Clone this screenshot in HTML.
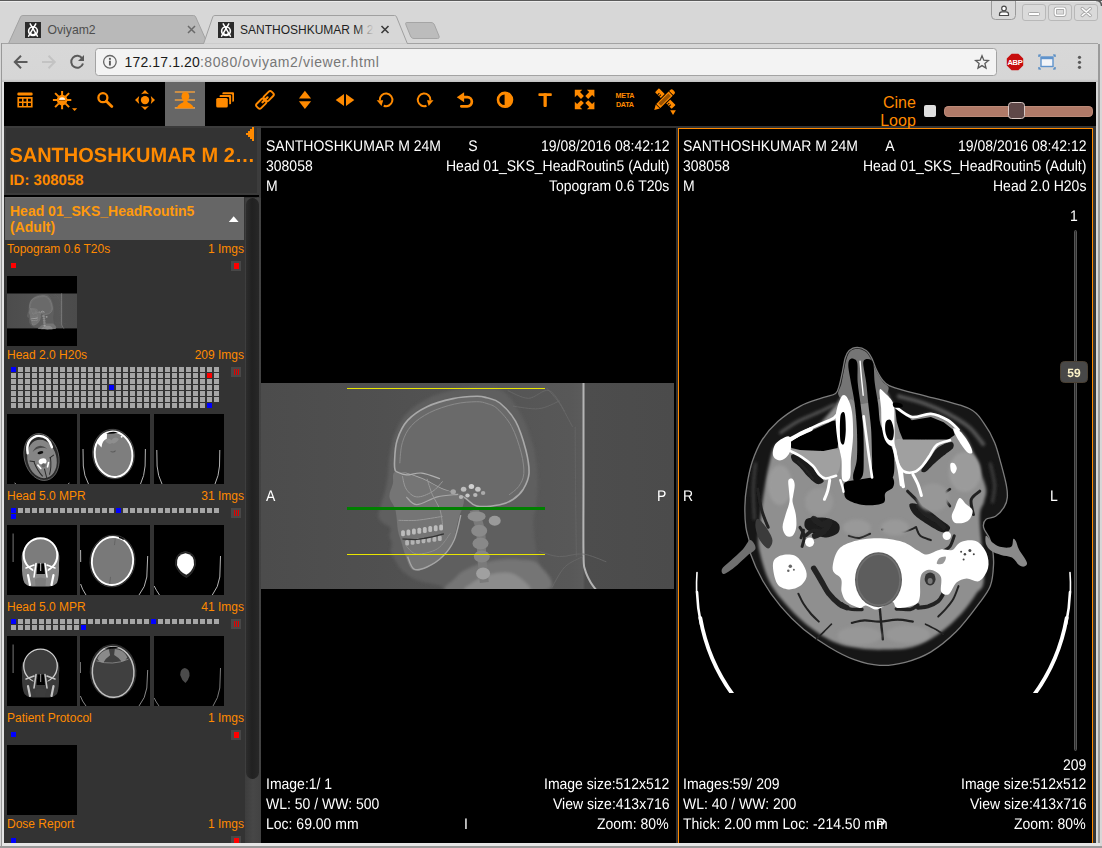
<!DOCTYPE html>
<html>
<head>
<meta charset="utf-8">
<title>SANTHOSHKUMAR M 24M</title>
<style>
*{box-sizing:border-box;margin:0;padding:0}
html,body{width:1102px;height:848px;overflow:hidden}
body{background:#d7d7d7;font-family:"Liberation Sans",sans-serif;position:relative}
.abs{position:absolute}
#frame-l1{left:2px;top:44px;width:2px;height:800px;background:#e4e4e4}
#frame-l2{left:1px;top:43px;width:1px;height:804px;background:#999}
#frame-top{left:0;top:0;width:1102px;height:1px;background:#5a5a5a}
#frame-r1{left:1098px;top:44px;width:2px;height:803px;background:#9a9a9a}
#frame-b1{left:2px;top:843px;width:1098px;height:3px;background:#e6e6e6}
#frame-b2{left:0;top:846px;width:1102px;height:2px;background:#9a9a9a}
/* tabs */
.tabtxt{font-size:13px;white-space:nowrap}
#nav{left:2px;top:44px;width:1096px;height:38px;background:linear-gradient(#d8d8d8,#d6d6d6 92%,#c2c2c2)}
#url{left:95px;top:48px;width:902px;height:28px;background:#f3f3f3;border:1px solid #a3a3a3;border-radius:3.5px}
#urltxt{left:124.6px;top:53px;font-size:14px;line-height:18px;color:#1a1a1a;white-space:nowrap;letter-spacing:0.12px}
#urltxt span{color:#777;letter-spacing:0.58px}
/* page */
#page{left:4px;top:82px;width:1092px;height:761px;background:#333;overflow:hidden}
#toolbar{left:0;top:0;width:1092px;height:44px;background:#000}
#toolsel{left:161px;top:0;width:40px;height:44px;background:#666}
.o{color:#ff8a00}
/* left */
#left{left:0;top:44px;width:257px;height:717px;background:#333}
#pname{left:5.4px;top:62px;width:250px;font-size:20px;font-weight:bold;line-height:24px;color:#ff8a00;white-space:nowrap;text-rendering:geometricPrecision;transform-origin:0 18.93px;transform:scaleY(1.03)}
#pid{left:5.4px;top:90px;font-size:15px;font-weight:bold;line-height:18px;color:#ff8a00;white-space:nowrap;text-rendering:geometricPrecision}
#sep{left:0;top:113px;width:255px;height:2px;background:#000}
#study{left:1px;top:115px;width:239px;height:43px;background:#666;border-top:1px solid #6f6f6f}
#studytxt{left:6px;top:121px;font-size:14px;font-weight:bold;line-height:16px;color:#ff9a0c;white-space:nowrap}
.sl{position:absolute;left:3px;font-size:12px;line-height:14px;color:#ff8a00;white-space:nowrap}
.sr{position:absolute;right:852px;font-size:12px;line-height:14px;color:#ff8a00;white-space:nowrap;text-align:right}
.th{position:absolute;width:70px;height:70px;background:#000;overflow:hidden}
.sq{position:absolute;width:5px;height:5px;background:#a6a6a6}
.ib{position:absolute;left:227px;width:10px;height:10px;background:#484848}
/* viewports */
.vp{position:absolute;background:#000;overflow:hidden}
.vt{text-rendering:geometricPrecision;will-change:transform;transform-origin:0 14.85px;transform:scaleY(1.1);position:absolute;font-size:14px;line-height:20px;color:#fff;white-space:nowrap}
</style>
</head>
<body>
<div class="abs" id="frame-top"></div>
<div class="abs" id="frame-l1"></div>
<div class="abs" id="frame-l2"></div>
<div class="abs" id="frame-r1"></div>
<div class="abs" id="frame-b1"></div>
<div class="abs" id="frame-b2"></div>

<!-- TABSTRIP -->
<svg class="abs" id="tabs" style="left:0;top:0" width="1102" height="48" viewBox="0 0 1102 48">
<defs>
<linearGradient id="fade" x1="0" x2="1" y1="0" y2="0"><stop offset="0" stop-color="#d7d7d7" stop-opacity="0"/><stop offset="1" stop-color="#d7d7d7" stop-opacity="1"/></linearGradient>
<g id="fav">
<rect x="0" y="0" width="16" height="16" fill="#2b2b2b"/>
<g fill="none" stroke="#fff" stroke-linecap="round">
<path d="M5.200 1.800 L12.400 14.200 M10.800 1.800 L3.600 14.200" stroke-width="1.500"/>
<circle cx="8" cy="9.100" r="4.400" stroke-width="1.600"/>
<path d="M5.300 11.200 Q8 14.600 10.700 11.200" stroke-width="1.700"/>
</g>
</g>
</defs>
<rect x="0" y="1" width="1102" height="1" fill="#ececec"/>
<!-- toolbar top line -->
<rect x="2" y="43" width="1096" height="1" fill="#a3a3a3"/>
<!-- inactive tab -->
<path d="M8.500 43.500 L20.600 16.800 Q21.200 15.500 22.800 15.500 L193.500 15.500 Q195 15.500 195.600 16.800 L207.500 43.500 Z" fill="#b9b9b9" stroke="#a2a2a2" stroke-width="1"/>
<!-- new tab button -->
<path d="M406.500 22.500 L431 22.500 C433 22.500 433.800 23.500 434.500 25 L439 36 C439.500 37.500 439 38.500 437.500 38.500 L414 38.500 C412 38.500 411.200 37.500 410.500 36 L406 25 C405.500 23.500 405.500 22.500 406.500 22.500 Z" fill="#bcbcbc" stroke="#a5a5a5" stroke-width="1"/>
<!-- active tab -->
<path d="M203.500 44 L212.800 16.800 Q213.300 15.500 214.900 15.500 L394.500 15.500 Q396 15.500 396.500 16.800 L407.500 44 Z" fill="#d7d7d7" stroke="#a0a0a0" stroke-width="1"/>
<rect x="204" y="43.400" width="203" height="2" fill="#d7d7d7"/>
<!-- favicons -->

<use href="#fav" x="25" y="22"/>
<use href="#fav" x="218" y="22"/>
<text x="47.500" y="34" font-family="Liberation Sans, sans-serif" font-size="12.200" fill="#4e4e4e">Oviyam2</text>
<text x="240" y="34" font-family="Liberation Sans, sans-serif" font-size="12" fill="#1f1f1f">SANTHOSHKUMAR M 24M</text>
<rect x="356" y="20" width="18" height="20" fill="url(#fade)"/>
<rect x="374" y="20" width="22" height="20" fill="#d7d7d7"/>
<!-- close x -->
<path d="M188 26 L195 33 M195 26 L188 33" stroke="#6a6a6a" stroke-width="1.500" fill="none"/>
<path d="M381.500 26 L388.500 33 M388.500 26 L381.500 33" stroke="#3c3c3c" stroke-width="1.600" fill="none"/>
<!-- window controls -->
<path d="M991.500 0 L991.500 15.500 Q991.500 19.500 995.500 19.500 L1011.500 19.500 Q1015.500 19.500 1015.500 15.500 L1015.500 0" fill="#d9d9d9" stroke="#9a9a9a" stroke-width="1"/>
<g fill="#fff" stroke="#4a4a4a" stroke-width="1.200">
<circle cx="1004" cy="8.500" r="2.300"/>
<path d="M999.500 15.500 L999.500 14 Q999.500 11.800 1002 11.800 L1006 11.800 Q1008.500 11.800 1008.500 14 L1008.500 15.500 Z"/>
</g>
<g fill="#dadada" stroke="#b8b8b8" stroke-width="1">
<rect x="1022.500" y="4.500" width="23" height="16" rx="2.500"/>
<rect x="1048.500" y="4.500" width="23" height="16" rx="2.500"/>
<rect x="1074.500" y="4.500" width="23" height="16" rx="2.500"/>
</g>
<rect x="1028.500" y="12.500" width="11" height="3" rx="1" fill="#fff" stroke="#a8a8a8" stroke-width="1"/>
<rect x="1055.300" y="8.300" width="9.600" height="7" rx="1.500" fill="none" stroke="#a8a8a8" stroke-width="3.200"/>
<rect x="1055.300" y="8.300" width="9.600" height="7" rx="1.500" fill="none" stroke="#fff" stroke-width="1.500"/>
<path d="M1082.200 8.500 L1090.200 15.500 M1090.200 8.500 L1082.200 15.500" stroke="#a8a8a8" stroke-width="3.400" fill="none" stroke-linecap="round"/>
<path d="M1082.200 8.500 L1090.200 15.500 M1090.200 8.500 L1082.200 15.500" stroke="#fff" stroke-width="1.600" fill="none" stroke-linecap="round"/>
<rect x="0" y="0" width="1102" height="1" fill="#5a5a5a"/>
<path d="M1096 0.500 Q1101.500 0.500 1101.500 6" fill="none" stroke="#555" stroke-width="1.400"/>
</svg>
<div class="abs" id="nav"></div>
<div class="abs" id="url"></div>
<div class="abs" id="urltxt">172.17.1.20<span>:8080/oviyam2/viewer.html</span></div>

<svg class="abs" id="navicons" style="left:0;top:44px" width="1102" height="38" viewBox="0 44 1102 38">
<!-- back -->
<path d="M27.500 62 L15 62 M21 55.800 L14.800 62 L21 68.200" fill="none" stroke="#5a5a5a" stroke-width="2"/>
<!-- forward -->
<path d="M42 62 L54.500 62 M48.500 55.800 L54.700 62 L48.500 68.200" fill="none" stroke="#c3c3c3" stroke-width="2"/>
<!-- reload -->
<path d="M82.300 58.500 A6 6 0 1 0 83 63.500" fill="none" stroke="#5a5a5a" stroke-width="2"/>
<path d="M84 55 L84 61 L78 61 Z" fill="#5a5a5a"/>
<!-- info -->
<circle cx="109.900" cy="61.800" r="6.300" fill="none" stroke="#666" stroke-width="1.300"/>
<rect x="108.950" y="60.700" width="1.900" height="4.800" fill="#5a5a5a"/>
<rect x="108.950" y="57.900" width="1.900" height="1.900" fill="#5a5a5a"/>
<!-- star -->
<path d="M982 55.700 L983.800 60.200 L988.400 60.500 L984.900 63.500 L986 68.100 L982 65.600 L978 68.100 L979.100 63.500 L975.600 60.500 L980.200 60.200 Z" fill="none" stroke="#5a5a5a" stroke-width="1.300" stroke-linejoin="miter"/>
<!-- abp -->
<path d="M1011.600 53.800 L1018.400 53.800 L1023.200 58.600 L1023.200 65.400 L1018.400 70.200 L1011.600 70.200 L1006.800 65.400 L1006.800 58.600 Z" fill="#c70d0d"/>
<text x="1015" y="65" text-anchor="middle" font-family="Liberation Sans, sans-serif" font-weight="bold" font-size="7.500" fill="#fff" letter-spacing="-0.2">ABP</text>
<!-- screen -->
<rect x="1041" y="57" width="12" height="9.500" fill="#f2f4f8" stroke="#5f93cc" stroke-width="1.400"/>
<rect x="1041" y="57" width="12" height="2.200" fill="#5f93cc"/>
<path d="M1039 57 L1039 55 L1041 55 M1053 55 L1055 55 L1055 57 M1039 67 L1039 69 L1041 69 M1053 69 L1055 69 L1055 67" fill="none" stroke="#3f7fc0" stroke-width="1.200"/>
<!-- menu -->
<circle cx="1079.500" cy="57.300" r="1.600" fill="#5a5a5a"/>
<circle cx="1079.500" cy="62.300" r="1.600" fill="#5a5a5a"/>
<circle cx="1079.500" cy="67.300" r="1.600" fill="#5a5a5a"/>
</svg>
<!-- THUMBDEFS -->
<svg width="0" height="0" style="position:absolute;left:0;top:0"><defs>
<filter id="hb" x="-10%" y="-10%" width="120%" height="120%"><feGaussianBlur stdDeviation="0.45"/></filter>
<filter id="hb2" x="-10%" y="-10%" width="120%" height="120%"><feGaussianBlur stdDeviation="0.9"/></filter>
<g id="t_topo"><g transform="translate(0 17.500) scale(0.16949) translate(-261 -383)"><use href="#topocontent"/></g></g>
<g id="t_h1" filter="url(#hb)"><g transform="rotate(-14 34.500 43)"><ellipse cx="34.500" cy="43" rx="17.200" ry="23.800" fill="#2a2a2a" stroke="#777" stroke-width="0.700"/><ellipse cx="34.500" cy="45" rx="14.500" ry="19.500" fill="#858585"/><path d="M22 36 Q23 22.500 34.500 21.500 Q46 22.500 47 36" fill="none" stroke="#fff" stroke-width="2.400" stroke-linecap="round"/><path d="M27 36 Q34.500 27 42 36 Q34.500 32 27 36Z" fill="#4a4a4a"/><ellipse cx="34.500" cy="38.500" rx="3" ry="1.500" fill="#111"/><ellipse cx="34.500" cy="47.500" rx="4" ry="3" fill="#fff"/><ellipse cx="34.500" cy="51.500" rx="2.200" ry="2" fill="#666"/><path d="M29 50 L31 54 M40 50 L38 54" stroke="#fff" stroke-width="1.600" stroke-linecap="round"/><path d="M34.500 55 V65 M26 46 Q27 55 31 62 M43 46 Q42 55 38 62 M22 44 L27 46 M47 44 L42 46" stroke="#2c2c2c" stroke-width="1" fill="none"/></g><path d="M7.500 69 L9 70" fill="none" stroke="#aaa" stroke-width="0.9"/><path d="M61 70 L62.500 69" fill="none" stroke="#aaa" stroke-width="0.9"/></g>
<g id="t_h2" filter="url(#hb)"><g transform="rotate(-8 33.500 40)"><ellipse cx="33.500" cy="40" rx="20.800" ry="24.800" fill="#262626" stroke="#666" stroke-width="0.600"/><ellipse cx="33.500" cy="40.300" rx="18.800" ry="22.800" fill="#7e7e7e" stroke="#fff" stroke-width="2"/><path d="M19 27 Q22 19.500 30 18.500 L29 24 Q24 25 22.500 32Z" fill="#fff"/><path d="M29 18.800 Q34.500 16.500 41 19.200 Q35 20.500 29 18.800Z" fill="#000"/><path d="M27 26 Q30 22 33.500 26 Q37 22 41 26 Q37 31 33.500 29 Q30 31 27 26Z" fill="#8e8e8e"/><path d="M31 37 Q33.500 39 36 37" stroke="#5a5a5a" stroke-width="1" fill="none"/><circle cx="44" cy="24" r="1" fill="#fff"/></g><path d="M3 35 L3.300 52 Q4 62 8.500 70" fill="none" stroke="#c8c8c8" stroke-width="0.9"/><path d="M65.400 35 L65.100 52 Q64.400 62 60.500 70" fill="none" stroke="#c8c8c8" stroke-width="0.9"/></g>
<g id="t_h3" filter="url(#hb)"><path d="M2.800 36 L3.100 52 Q3.800 62 8 70" fill="none" stroke="#c8c8c8" stroke-width="0.9"/><path d="M65.800 36 L65.500 52 Q64.800 62 61 70" fill="none" stroke="#c8c8c8" stroke-width="0.9"/></g>
<g id="t_m1" filter="url(#hb)"><path d="M6.100 8.500 V37" stroke="#aaa" stroke-width="0.700"/><path d="M15 38 Q14 30 16 26 L51 26 Q53 30 52 38 Q52.500 52 50 58 Q46 62 40 61.500 L27 61.500 Q21 62 17.500 58 Q14.500 52 15 38Z" fill="#8a8a8a"/><ellipse cx="33.500" cy="30" rx="16.800" ry="16.800" fill="#7c7c7c" stroke="#fff" stroke-width="2"/><path d="M26 41 Q33.500 37 41 41 L40 53 Q33.500 56 27 53Z" fill="#8a8a8a"/><path d="M29 38.500 L27 52 M38 38.500 L40 52 M27 40 L19 43 M40 40 L48 43" stroke="#fff" stroke-width="1.600" fill="none" stroke-linecap="round"/><path d="M30.500 38.500 H37 L38 49 H29.500Z" fill="#000"/><path d="M33.700 38 V46" stroke="#fff" stroke-width="0.800"/><path d="M21 50 L23 60 M46.500 50 L44.500 60" stroke="#fff" stroke-width="2.200" stroke-linecap="round"/><path d="M28 54 Q33.500 51 39 54 L38.500 61 H28.500Z" fill="#7c7c7c"/></g>
<g id="t_b1" filter="url(#hb)"><path d="M6.100 8.500 V37" stroke="#aaa" stroke-width="0.700"/><path d="M15 38 Q14 30 16 26 L51 26 Q53 30 52 38 Q52.500 52 50 58 Q46 62 40 61.500 L27 61.500 Q21 62 17.500 58 Q14.500 52 15 38Z" fill="#3a3a3a"/><ellipse cx="33.500" cy="30" rx="16.800" ry="16.800" fill="#3d3d3d" stroke="#cfcfcf" stroke-width="1.3"/><path d="M26 41 Q33.500 37 41 41 L40 53 Q33.500 56 27 53Z" fill="#3a3a3a"/><path d="M29 38.500 L27 52 M38 38.500 L40 52 M27 40 L19 43 M40 40 L48 43" stroke="#c4c4c4" stroke-width="1.600" fill="none" stroke-linecap="round"/><path d="M30.500 38.500 H37 L38 49 H29.500Z" fill="#000"/><path d="M33.700 38 V46" stroke="#c4c4c4" stroke-width="0.800"/><path d="M21 50 L23 60 M46.500 50 L44.500 60" stroke="#c4c4c4" stroke-width="2.200" stroke-linecap="round"/><path d="M28 54 Q33.500 51 39 54 L38.500 61 H28.500Z" fill="#3d3d3d"/></g>
<g id="t_m2" filter="url(#hb)"><g transform="rotate(7 32.500 36)"><ellipse cx="32.500" cy="36" rx="22.600" ry="26" fill="#242424" stroke="#5a5a5a" stroke-width="0.500"/><ellipse cx="32.500" cy="36" rx="20.600" ry="24" fill="#797979" stroke="#fff" stroke-width="1.900"/><path d="M32.500 14 V20 M32.500 52 V59" stroke="#606060" stroke-width="0.800"/><path d="M36 11.800 Q39 12 41 13.200" stroke="#000" stroke-width="1.200" fill="none"/></g><path d="M0.600 25 L0.700 37" fill="none" stroke="#c8c8c8" stroke-width="0.9"/><path d="M67.700 31 L66.800 52 Q65.500 62 59 70" fill="none" stroke="#c8c8c8" stroke-width="0.9"/><path d="M0.600 59 Q2 64 6 70" fill="none" stroke="#c8c8c8" stroke-width="0.9"/></g>
<g id="t_m3" filter="url(#hb)"><path d="M31.500 26.500 Q42.500 28 41.500 40 Q39 49 32.500 52.500 Q24.500 49 21.500 40 Q20.500 28 31.500 26.500Z" fill="#222" stroke="#3a3a3a" stroke-width="0.600"/><path d="M31.500 28.300 Q40.800 29.500 40 40 Q38 47 32.300 49.800 Q25.500 47 23 40 Q22 29.500 31.500 28.300Z" fill="#fff"/><path d="M0.200 61 Q2 65 5.500 70" fill="none" stroke="#c8c8c8" stroke-width="0.9"/><path d="M66.500 31 L65.800 52 Q64.500 62 58.300 70" fill="none" stroke="#c8c8c8" stroke-width="0.9"/></g>
<g id="t_b2" filter="url(#hb)"><g transform="rotate(-3 33.100 35.500)"><ellipse cx="33.100" cy="35.500" rx="23.400" ry="27.400" fill="#2e2e2e"/><ellipse cx="33.100" cy="36" rx="20.800" ry="25.300" fill="#3f3f3f" stroke="#c2c2c2" stroke-width="1.500"/><path d="M18 22 Q21 14 30 13 L31 19 Q26 22 24 26 Q20 26 18 22Z" fill="#8a8a8a"/><path d="M48 22 Q45 14 36 13 L35 19 Q40 22 42 26 Q46 26 48 22Z" fill="#858585"/><path d="M26 11.800 Q33 9.500 40 11.800 Q33 13.500 26 11.800Z" fill="#000"/><path d="M17 24 Q33 30 49 24" stroke="#999" stroke-width="0.700" fill="none"/></g><path d="M0.300 26 L0.400 37" fill="none" stroke="#aaa" stroke-width="0.8"/><path d="M67.700 34 L66.800 52 Q65.500 62 59 70" fill="none" stroke="#aaa" stroke-width="0.8"/><path d="M0.400 60 Q2 65 6 70" fill="none" stroke="#aaa" stroke-width="0.8"/></g>
<g id="t_b3" filter="url(#hb)"><path d="M30.900 32 Q36 33 35.500 40 Q34 45 31.500 47 Q27.500 44 26.200 39 Q26 33 30.900 32Z" fill="#4c4c4c"/><path d="M0.200 62 Q2 66 5 70" fill="none" stroke="#999" stroke-width="0.8"/><path d="M66.500 32 L65.800 52 Q64.500 62 59 70" fill="none" stroke="#999" stroke-width="0.8"/></g>
</defs></svg>
<!-- /THUMBDEFS -->
<div class="abs" id="page">
  <div class="abs" id="toolbar"></div>
  <div class="abs" id="toolsel"></div>
  <svg class="abs" id="toolicons" style="left:0;top:0" width="1092" height="46" viewBox="4 82 1092 46">
<g fill="#ff8a00" stroke="none">
<!-- 1 table -->
<rect x="17.400" y="92.400" width="15.200" height="3.100" rx="1.200"/>
<path fill-rule="evenodd" d="M17.400 97.100 H32.600 V107.600 H17.400 Z M19.100 98.700 V101.500 H22 V98.700 Z M23.500 98.700 V101.500 H26.400 V98.700 Z M28 98.700 V101.500 H30.900 V98.700 Z M19.100 103.100 V105.900 H22 V103.100 Z M23.500 103.100 V105.900 H26.400 V103.100 Z M28 103.100 V105.900 H30.900 V103.100 Z"/>
<!-- 2 sun -->
<circle cx="62.100" cy="100.100" r="5.300"/>
<path d="M59.100 99.900 A3 2.600 0 0 1 65.100 99.900 Z" fill="#fff3e0"/>
<rect x="59" y="99.900" width="6.200" height="0.700" fill="#7a4200"/>
<g stroke="#ff8a00" stroke-width="2" stroke-linecap="butt" fill="none">
<path d="M62.100 95.300 V90.900 M62.100 104.900 V109.300 M57.300 100.100 H52.900 M66.900 100.100 H71.300 M58.600 96.600 L55.100 93.100 M65.600 96.600 L69.100 93.100 M58.600 103.600 L55.100 107.100 M65.600 103.600 L69.100 107.100"/>
</g>
<path d="M72 108.200 H77.200 L74.600 111 Z"/>
<!-- 3 search -->
<circle cx="102.900" cy="97.700" r="4.500" fill="none" stroke="#ff8a00" stroke-width="2.300"/>
<path d="M106.400 101.200 L111.800 106.600" fill="none" stroke="#ff8a00" stroke-width="2.800" stroke-linecap="round"/>
<!-- 4 move -->
<circle cx="145" cy="100.100" r="4.200"/>
<path d="M145 90.100 L149 94.300 Q145 92.800 141 94.300 Z"/>
<path d="M145 110.100 L149 105.900 Q145 107.400 141 105.900 Z"/>
<path d="M135 100.100 L139.200 96.100 Q137.700 100.100 139.200 104.100 Z"/>
<path d="M155 100.100 L150.800 96.100 Q152.300 100.100 150.800 104.100 Z"/>
<!-- 5 person -->
<g stroke="#c9a173" stroke-width="1.700"><path d="M174.800 92 H195 M174.800 100 H195 M174.800 107.900 H195"/></g>
<g stroke="#f08a10" stroke-width="0.900"><path d="M175.300 92 H194.500 M175.300 100 H194.500 M175.300 107.900 H194.500"/></g>
<ellipse cx="185.400" cy="96.400" rx="3.900" ry="4.500"/>
<path d="M183.400 99.500 H187.400 V102 Q188 102.800 190 103.600 Q192.500 104.800 193.800 107.900 H176.600 Q178 104.800 180.800 103.600 Q182.800 102.800 183.400 102 Z"/>
<!-- 6 stack -->
<rect x="216.200" y="97.900" width="11.600" height="9.700" rx="1.500"/>
<path d="M219.600 97 V96 Q219.600 95 220.600 95 H230.100 Q231.100 95 231.100 96 V103.300 Q231.100 104.300 230.100 104.300 H229.200 V98 Q229.200 97 228.200 97 Z"/>
<path d="M222.400 94.200 V93.300 Q222.400 92.300 223.400 92.300 H233 Q234 92.300 234 93.300 V100.800 Q234 101.800 233 101.800 H232.300 V95.200 Q232.300 94.200 231.300 94.200 Z"/>
<!-- 7 link -->
<g fill="none" stroke="#ff8a00" stroke-width="1.900">
<rect x="-5.200" y="-3.100" width="10.400" height="6.200" rx="2" transform="translate(268.700 96.100) rotate(-45)"/>
<rect x="-5.200" y="-3.100" width="10.400" height="6.200" rx="2" transform="translate(261.200 103.700) rotate(-45)"/>
<path d="M262.500 102.300 L267.500 97.400" stroke-width="2.300" stroke-linecap="round"/>
</g>
<!-- 8 updown -->
<path d="M304.900 90.800 L311.100 98.500 H298.900 Z"/>
<path d="M304.900 109.100 L311.100 101.300 H298.900 Z"/>
<!-- 9 leftright -->
<path d="M335.700 100 L344 94.100 V105.900 Z"/>
<path d="M354.300 100 L346 94.100 V105.900 Z"/>
<!-- 10 rotate ccw -->
<path d="M379.800 100.200 A6.300 6.300 0 1 1 383.700 105.700" fill="none" stroke="#ff8a00" stroke-width="2"/>
<path d="M376.700 100.300 L383.200 100.300 L381.500 105.900 Z"/>
<!-- 11 rotate cw -->
<path d="M430.400 100.200 A6.300 6.300 0 1 0 426.500 105.700" fill="none" stroke="#ff8a00" stroke-width="2"/>
<path d="M433.500 100.300 L427 100.300 L428.700 105.900 Z"/>
<!-- 12 undo -->
<path d="M456.800 97.200 L464.100 92.200 V102.200 Z"/>
<path d="M463.500 97.200 H467.300 A4.550 4.550 0 0 1 467.300 106.300 H461.300" fill="none" stroke="#ff8a00" stroke-width="2.700" stroke-linecap="round"/>
<!-- 13 contrast -->
<path fill-rule="evenodd" d="M505 91.500 A8.300 8.300 0 1 1 505 108.100 A8.300 8.300 0 1 1 505 91.500 Z M504.600 94.500 A5.300 5.300 0 0 0 504.600 105.100 Z"/>
<!-- 14 T -->
<rect x="538.400" y="93.300" width="13.400" height="2.800" rx="0.800"/>
<rect x="543.500" y="93.300" width="3.300" height="13.600" rx="0.800"/>
<!-- 15 expand -->
<path d="M574.800 89.800 H582.300 L580 92.100 L583.900 96 L581 98.900 L577.100 95 L574.800 97.300 Z"/>
<path d="M594.400 89.800 V97.300 L592.100 95 L588.200 98.900 L585.300 96 L589.200 92.100 L586.900 89.800 Z"/>
<path d="M574.800 109.300 V101.800 L577.100 104.100 L581 100.200 L583.900 103.100 L580 107 L582.300 109.300 Z"/>
<path d="M594.400 109.300 H586.900 L589.200 107 L585.300 103.100 L588.200 100.200 L592.100 104.100 L594.400 101.800 Z"/>
<!-- 17 ruler pencil -->
<g transform="translate(665.300 98.600) rotate(45)">
<rect x="-11.800" y="-2.800" width="23.600" height="5.600" rx="0.800"/>
<g fill="#000"><rect x="-8.500" y="0.300" width="0.900" height="2.500"/><rect x="-6.300" y="0.300" width="0.900" height="2.500"/><rect x="5.500" y="0.300" width="0.900" height="2.500"/><rect x="7.700" y="0.300" width="0.900" height="2.500"/></g>
</g>
<g transform="translate(664.300 100) rotate(-45)">
<rect x="-13.800" y="-3.900" width="27.600" height="7.800" fill="#000"/>
<path d="M-8.500 -2.900 H9 V2.900 H-8.500 Z"/>
<rect x="-6.500" y="-1.800" width="14" height="3.600" fill="#9a5200"/>
<path d="M9.800 -2.900 H11.300 Q13.300 -2.900 13.300 -0.900 V0.900 Q13.300 2.900 11.300 2.900 H9.800 Z"/>
<path d="M-9.200 -2.900 L-14.200 0 L-9.200 2.900 Z"/>
</g>
<path d="M670.200 110.200 H675.900 L673 115 Z"/>
</g>
<g font-family="Liberation Sans, sans-serif" font-weight="bold" font-size="7.200" fill="#ff8a00" text-anchor="middle" letter-spacing="-0.300">
<text x="624.800" y="98.100">META</text>
<text x="624.800" y="107.200">DATA</text>
</g>
<!-- cine loop -->
<g font-family="Liberation Sans, sans-serif" font-size="16" fill="#ff8a00" text-anchor="end">
<text x="915.800" y="108">Cine</text>
<text x="915.800" y="126">Loop</text>
</g>
<rect x="924" y="105" width="12" height="12" rx="2" fill="#dedede"/>
<rect x="944" y="106" width="149" height="11" rx="4.500" fill="#b07a68"/>
<rect x="944.500" y="106.500" width="148" height="10" rx="4" fill="none" stroke="#c59584" stroke-width="1" opacity="0.600"/>
<rect x="1008.500" y="102.500" width="16" height="16" rx="3" fill="#5f4848" stroke="#d8c8c4" stroke-width="1"/>
</svg>
  <div class="abs" id="left"></div>
  <!-- LEFTCONTENT -->
<div class="abs" style="left:0;top:44px;width:257px;height:2px;background:#3b3b3b"></div>
<div class="abs" style="left:253px;top:44px;width:4px;height:717px;background:#3c3c3c"></div>
<svg class="abs" style="left:240px;top:44px" width="12" height="17" viewBox="244 126 12 17" shape-rendering="crispEdges"><g fill="#ff8a00"><rect x="246" y="133" width="2" height="2"/><rect x="248" y="131" width="2" height="6"/><rect x="250" y="129" width="2" height="10"/><rect x="252" y="127" width="2" height="14"/></g></svg>
<div class="abs hdrborder" style="left:0;top:44px;width:2px;height:69px;background:#3b3b3b"></div>
<div class="abs" style="left:0;top:111px;width:257px;height:2px;background:#3b3b3b"></div>
<div class="abs" id="pname">SANTHOSHKUMAR M 2…</div>
<div class="abs" id="pid">ID: 308058</div>
<div class="abs" id="sep"></div>
<div class="abs" id="study"></div>
<div class="abs" id="studytxt">Head 01_SKS_HeadRoutin5<br>(Adult)</div>
<svg class="abs" style="left:224px;top:133px" width="12" height="8" viewBox="228 215 12 8"><path d="M228.800 222 L233.700 216.300 L238.600 222 Z" fill="#fff"/></svg>
<div class="abs" style="left:241px;top:116px;width:16px;height:645px;background:linear-gradient(90deg,#3d3d3d,#474747 50%,#424242)"></div>
<div class="abs" style="left:242px;top:116px;width:13px;height:581px;border-radius:7px;background:linear-gradient(90deg,#2c2c2c,#212121 45%,#272727)"></div>
<div class="sl" style="top:160px">Topogram 0.6 T20s</div>
<div class="sr" style="top:160px">1 Imgs</div>
<div class="th" style="left:3px;top:194px"><svg width="70" height="70" viewBox="0 0 70 70"><use href="#t_topo"/></svg></div>
<div class="sl" style="top:266px">Head 2.0 H20s</div>
<div class="sr" style="top:266px">209 Imgs</div>
<div class="th" style="left:3px;top:332px"><svg width="70" height="70" viewBox="0 0 70 70"><use href="#t_h1"/></svg></div>
<div class="th" style="left:76px;top:332px"><svg width="70" height="70" viewBox="0 0 70 70"><use href="#t_h2"/></svg></div>
<div class="th" style="left:150px;top:332px"><svg width="70" height="70" viewBox="0 0 70 70"><use href="#t_h3"/></svg></div>
<div class="sl" style="top:407px">Head 5.0 MPR</div>
<div class="sr" style="top:407px">31 Imgs</div>
<div class="th" style="left:3px;top:443px"><svg width="70" height="70" viewBox="0 0 70 70"><use href="#t_m1"/></svg></div>
<div class="th" style="left:76px;top:443px"><svg width="70" height="70" viewBox="0 0 70 70"><use href="#t_m2"/></svg></div>
<div class="th" style="left:150px;top:443px"><svg width="70" height="70" viewBox="0 0 70 70"><use href="#t_m3"/></svg></div>
<div class="sl" style="top:518px">Head 5.0 MPR</div>
<div class="sr" style="top:518px">41 Imgs</div>
<div class="th" style="left:3px;top:554px"><svg width="70" height="70" viewBox="0 0 70 70"><use href="#t_b1"/></svg></div>
<div class="th" style="left:76px;top:554px"><svg width="70" height="70" viewBox="0 0 70 70"><use href="#t_b2"/></svg></div>
<div class="th" style="left:150px;top:554px"><svg width="70" height="70" viewBox="0 0 70 70"><use href="#t_b3"/></svg></div>
<div class="sl" style="top:629px">Patient Protocol</div>
<div class="sr" style="top:629px">1 Imgs</div>
<div class="th" style="left:3px;top:663px"></div>
<div class="sl" style="top:735px">Dose Report</div>
<div class="sr" style="top:735px">1 Imgs</div>
<svg class="abs" style="left:0;top:168px" width="245" height="593" viewBox="4 250 245 593" shape-rendering="crispEdges"><defs><pattern id="sq" x="11" y="1" width="7" height="6" patternUnits="userSpaceOnUse"><rect width="5" height="5" fill="#a6a6a6"/></pattern></defs><g transform="translate(0 262)"><rect x="11" y="1" width="5" height="5" fill="#f00"/></g><rect x="231" y="261" width="10" height="10" fill="#484848"/><rect x="234" y="263" width="5" height="6" fill="#f00"/><g transform="translate(0 366)"><rect x="11" y="1" width="208" height="35" fill="url(#sq)"/><rect x="11" y="37" width="201" height="5" fill="url(#sq)"/><rect x="11" y="1" width="5" height="5" fill="#00f"/><rect x="109" y="19" width="5" height="5" fill="#00f"/><rect x="207" y="37" width="5" height="5" fill="#00f"/><rect x="207" y="7" width="5" height="5" fill="#f00"/></g><rect x="231" y="367" width="10" height="10" fill="#484848"/><path d="M234.300 369 V375 M236.400 369 V375 M238.500 369 V375" stroke="#e00000" stroke-width="1.100" fill="none"/><g transform="translate(0 507)"><rect x="11" y="1" width="208" height="5" fill="url(#sq)"/><rect x="11" y="7" width="5" height="5" fill="url(#sq)"/><rect x="11" y="1" width="5" height="5" fill="#00f"/><rect x="116" y="1" width="5" height="5" fill="#00f"/><rect x="11" y="7" width="5" height="5" fill="#00f"/></g><rect x="231" y="508" width="10" height="10" fill="#484848"/><path d="M234.300 510 V516 M236.400 510 V516 M238.500 510 V516" stroke="#e00000" stroke-width="1.100" fill="none"/><g transform="translate(0 618)"><rect x="11" y="1" width="208" height="5" fill="url(#sq)"/><rect x="11" y="7" width="75" height="5" fill="url(#sq)"/><rect x="11" y="1" width="5" height="5" fill="#00f"/><rect x="151" y="1" width="5" height="5" fill="#00f"/><rect x="81" y="7" width="5" height="5" fill="#00f"/></g><rect x="231" y="619" width="10" height="10" fill="#484848"/><path d="M234.300 621 V627 M236.400 621 V627 M238.500 621 V627" stroke="#e00000" stroke-width="1.100" fill="none"/><g transform="translate(0 731)"><rect x="11" y="1" width="5" height="5" fill="#00f"/></g><rect x="231" y="730" width="10" height="10" fill="#484848"/><rect x="234" y="732" width="5" height="6" fill="#f00"/><g transform="translate(0 837)"><rect x="11" y="1" width="5" height="5" fill="#00f"/></g><rect x="231" y="836" width="10" height="10" fill="#484848"/><rect x="234" y="838" width="5" height="6" fill="#f00"/></svg>
<!-- /LEFTCONTENT -->
  <!-- VIEWPORTS -->
<div class="vp" id="vp1" style="left:257px;top:46px;width:415px;height:715px">
<!-- IMG1 -->
<svg class="abs" style="left:0;top:255px" width="413" height="206" viewBox="261 383 413 206">
<defs><linearGradient id="tbg" x1="0" x2="1" y1="0" y2="0"><stop offset="0" stop-color="#4c4c4c"/><stop offset="0.3" stop-color="#505050"/><stop offset="0.75" stop-color="#585858"/><stop offset="0.779" stop-color="#5b5b5b"/><stop offset="0.785" stop-color="#4d4d4d"/><stop offset="1" stop-color="#4b4b4b"/></linearGradient>
<filter id="tb1" x="-5%" y="-5%" width="110%" height="110%"><feGaussianBlur stdDeviation="0.6"/></filter><filter id="tb2" x="-5%" y="-5%" width="110%" height="110%"><feGaussianBlur stdDeviation="1.8"/></filter>
<clipPath id="tclip"><rect x="261" y="383" width="413" height="206"/></clipPath></defs>
<g clip-path="url(#tclip)">
<g id="topocontent">
<rect x="261" y="383" width="413" height="206" fill="url(#tbg)"/>
<g filter="url(#tb2)">
<path d="M481.0 387.5 C472.7 387.3 462.0 388.1 453.0 390.0 C444.0 391.9 434.8 394.9 427.0 398.9 C419.3 402.8 411.7 407.9 406.3 413.9 C400.9 419.9 397.4 427.3 394.6 434.7 C391.8 442.0 390.5 451.5 389.4 458.0 C388.3 464.5 388.8 468.4 388.1 473.6 C387.5 478.8 386.7 484.0 385.5 489.2 C384.3 494.3 382.1 500.2 380.9 504.7 C379.6 509.3 377.9 513.4 378.3 516.4 C378.6 519.4 380.9 520.9 382.9 522.9 C385.0 524.8 389.6 525.9 390.7 528.1 C391.8 530.2 389.2 533.3 389.4 535.9 C389.6 538.4 391.8 541.0 392.0 543.6 C392.2 546.2 390.1 548.4 390.7 551.4 C391.4 554.4 394.0 558.6 395.9 561.8 C397.9 565.0 398.9 567.8 402.4 570.9 C405.9 573.9 410.4 577.5 416.7 580.0 C422.9 582.4 434.0 583.9 440.0 585.7 C446.1 587.4 435.2 589.6 453.0 590.3 C470.8 591.1 532.3 595.1 546.6 590.3 C560.9 585.6 540.8 570.0 538.8 561.8 C536.9 553.6 535.8 548.0 534.9 541.0 C534.1 534.1 533.4 526.3 533.6 520.3 C533.9 514.2 535.6 511.6 536.2 504.7 C536.9 497.8 538.0 488.3 537.5 478.8 C537.1 469.3 536.5 458.5 533.6 447.6 C530.8 436.8 525.9 423.3 520.7 413.9 C515.5 404.5 509.1 395.5 502.5 391.1 C495.9 386.7 489.3 387.6 481.0 387.5 Z" fill="#5f5f5f"/>
<path d="M450.6 592.9 C435.5 590.8 452.4 581.7 455.8 577.4 C459.3 573.0 464.9 569.8 471.4 567.0 C477.9 564.2 486.5 561.7 494.7 560.5 C502.9 559.3 513.3 559.1 520.7 559.7 C528.0 560.4 534.5 559.3 538.8 564.4 C543.2 569.5 561.3 585.6 546.6 590.3 C531.9 595.1 465.8 595.1 450.6 592.9 Z" fill="#747474"/>
<path d="M466.2 592.9 C457.5 590.8 471.8 583.2 476.6 580.0 C481.3 576.7 488.2 574.3 494.7 573.5 C501.2 572.6 509.9 571.5 515.5 574.8 C521.1 578.0 536.7 589.9 528.5 592.9 C520.2 596.0 474.8 595.1 466.2 592.9 Z" fill="#8c8c8c"/>
</g>
<g filter="url(#tb1)">
<path d="M395.9 471.5 C394.0 469.3 394.4 465.9 394.6 460.6 C394.8 455.3 395.0 446.6 397.2 439.9 C399.4 433.2 402.6 425.9 407.6 420.4 C412.6 414.9 419.5 410.3 427.0 406.7 C434.6 403.0 444.8 400.3 453.0 398.6 C461.2 396.9 470.7 396.4 476.3 396.3 C482.0 396.1 483.0 396.7 486.9 397.8 C490.9 399.0 495.2 399.1 499.9 403.0 C504.7 406.9 511.2 413.3 515.5 421.2 C519.8 429.0 523.6 441.5 525.9 450.2 C528.1 459.0 529.4 467.1 529.0 473.6 C528.5 480.1 525.9 484.8 523.3 489.2 C520.6 493.5 516.8 496.9 512.9 499.5 C509.0 502.1 506.0 503.6 499.9 504.7 C493.9 505.8 482.7 507.3 476.6 506.0 C470.5 504.7 469.0 499.7 463.4 496.9 C457.7 494.1 449.5 492.2 442.6 489.2 C435.7 486.1 427.9 481.4 421.9 478.8 C415.8 476.2 410.6 474.8 406.3 473.6 C402.0 472.4 397.9 473.7 395.9 471.5 Z" fill="#6b6b6b" stroke="#a9a9a9" stroke-width="1.6"/>
<path d="M399.8 463.2 C400.2 459.7 400.4 448.7 402.4 442.5 C404.3 436.2 406.9 430.6 411.5 425.6 C416.0 420.6 422.5 416.2 429.6 412.6 C436.8 409.0 446.5 405.9 454.3 404.1 C462.1 402.2 470.9 401.8 476.3 401.7 C481.8 401.6 483.4 402.4 486.9 403.5 C490.4 404.7 493.2 404.9 497.3 408.7 C501.4 412.5 507.6 419.0 511.6 426.4 C515.6 433.7 519.2 445.0 521.2 452.8 C523.2 460.7 524.2 468.0 523.8 473.6 C523.4 479.2 521.1 483.0 518.6 486.6 C516.1 490.1 510.6 493.5 509.0 494.9" fill="none" stroke="#8a8a8a" stroke-width="1"/>
<path d="M395.9 471.5 C391.1 472.4 393.9 479.7 392.8 484.0 C391.7 488.2 389.0 492.6 389.4 496.9 C389.9 501.3 394.0 504.3 395.4 509.9 C396.8 515.5 397.0 525.5 398.0 530.7 C398.9 535.9 399.8 536.7 401.1 541.0 C402.4 545.4 403.8 551.8 405.8 556.6 C407.7 561.4 409.2 568.3 412.8 570.1 C416.3 571.9 422.1 569.8 427.0 567.5 C432.0 565.3 438.3 561.0 442.6 556.6 C446.9 552.2 450.4 547.1 453.0 541.0 C455.6 535.0 456.4 527.6 458.2 520.3 C459.9 512.9 466.0 502.1 463.4 496.9 C460.8 491.7 449.5 492.2 442.6 489.2 C435.7 486.1 429.6 481.7 421.9 478.8 C414.1 475.8 400.8 470.6 395.9 471.5 Z" fill="#747474"/>
<path d="M395.9 471.5 C397.6 472.1 402.0 474.6 406.3 474.9 C410.6 475.1 416.2 472.4 421.9 473.1 C427.5 473.7 437.0 477.8 440.0 478.8" fill="none" stroke="#b0b0b0" stroke-width="1.2"/>
<path d="M402.4 476.2 C403.0 478.3 403.9 485.7 406.3 489.2 C408.7 492.6 412.3 496.5 416.7 496.9 C421.0 497.4 427.9 494.3 432.2 491.7 C436.6 489.2 440.9 483.1 442.6 481.4" fill="none" stroke="#9a9a9a" stroke-width="1"/>
<path d="M406.3 496.9 C408.0 498.2 411.5 504.7 416.7 504.7 C421.9 504.7 430.5 498.7 437.4 496.9 C444.3 495.2 454.7 494.8 458.2 494.3" fill="none" stroke="#a8a8a8" stroke-width="1.2"/>
<path d="M427.0 478.8 C427.9 481.4 430.1 489.2 432.2 494.3 C434.4 499.5 438.3 504.7 440.0 509.9 C441.7 515.1 442.2 522.9 442.6 525.5" fill="none" stroke="#999" stroke-width="1"/>
<path d="M398.5 520.3 C401.5 520.3 409.3 520.9 416.7 520.3 C424.0 519.6 438.3 517.0 442.6 516.4" fill="none" stroke="#999" stroke-width="1"/>
<path d="M407.6 556.6 C408.7 558.7 410.8 567.3 414.1 569.1 C417.3 570.8 422.3 569.1 427.0 567.0 C431.8 564.9 438.1 561.1 442.6 556.6 C447.1 552.1 451.3 546.7 454.3 539.7 C457.3 532.8 459.7 519.2 460.8 515.1" fill="none" stroke="#a5a5a5" stroke-width="1.4"/>
<path d="M406.3 546.2 C408.0 547.5 411.5 553.6 416.7 554.0 C421.9 554.4 431.8 552.3 437.4 548.8 C443.0 545.4 448.2 535.9 450.4 533.3" fill="none" stroke="#8c8c8c" stroke-width="1"/>
<rect x="401.1" y="530.3" width="3.800" height="6" rx="1.500" fill="#bcbcbc"/>
<rect x="406.5" y="529.4" width="3.800" height="6" rx="1.500" fill="#bcbcbc"/>
<rect x="412.0" y="528.6" width="3.800" height="6" rx="1.500" fill="#bcbcbc"/>
<rect x="417.4" y="527.8" width="3.800" height="6" rx="1.500" fill="#bcbcbc"/>
<rect x="422.9" y="527.0" width="3.800" height="6" rx="1.500" fill="#bcbcbc"/>
<rect x="428.3" y="526.1" width="3.800" height="6" rx="1.500" fill="#bcbcbc"/>
<rect x="433.8" y="525.3" width="3.800" height="6" rx="1.500" fill="#bcbcbc"/>
<rect x="439.2" y="524.5" width="3.800" height="6" rx="1.500" fill="#bcbcbc"/>
<rect x="405.2" y="540.1" width="3.800" height="5.500" rx="1.500" fill="#b4b4b4"/>
<rect x="410.7" y="539.3" width="3.800" height="5.500" rx="1.500" fill="#b4b4b4"/>
<rect x="416.1" y="538.6" width="3.800" height="5.500" rx="1.500" fill="#b4b4b4"/>
<rect x="421.6" y="537.8" width="3.800" height="5.500" rx="1.500" fill="#b4b4b4"/>
<rect x="427.0" y="537.0" width="3.800" height="5.500" rx="1.500" fill="#b4b4b4"/>
<rect x="432.5" y="536.2" width="3.800" height="5.500" rx="1.500" fill="#b4b4b4"/>
<rect x="437.9" y="535.4" width="3.800" height="5.500" rx="1.500" fill="#b4b4b4"/>
<path d="M402.4 539.0 C404.8 539.1 411.7 539.8 416.7 539.5 C421.6 539.1 427.7 537.8 432.2 536.9 C436.8 535.9 442.0 534.3 443.9 533.8" fill="none" stroke="#333" stroke-width="1.2"/>
<ellipse cx="463.6" cy="489.2" rx="2.75" ry="2.5" fill="#bdbdbd"/>
<ellipse cx="471.4" cy="486.6" rx="2.75" ry="2.5" fill="#d0d0d0"/>
<ellipse cx="477.9" cy="489.2" rx="2.75" ry="2.5" fill="#c4c4c4"/>
<ellipse cx="467.5" cy="495.6" rx="2.2" ry="2.0" fill="#c8c8c8"/>
<ellipse cx="475.3" cy="494.9" rx="2.2" ry="2.0" fill="#b8b8b8"/>
<ellipse cx="483.1" cy="493.0" rx="2.2" ry="2.0" fill="#aaa"/>
<ellipse cx="461.0" cy="496.9" rx="2.2" ry="2.0" fill="#b5b5b5"/>
<ellipse cx="453.2" cy="491.7" rx="2.75" ry="2.5" fill="#a5a5a5"/>
<path d="M474.0 509.9 C475.1 513.4 479.2 522.9 480.5 530.7 C481.8 538.4 481.1 548.0 481.8 556.6 C482.4 565.3 483.9 578.2 484.3 582.5" fill="none" stroke="#7a7a7a" stroke-width="9"/>
<ellipse cx="476.6" cy="516.4" rx="9" ry="5" fill="#8e8e8e"/>
<ellipse cx="494.7" cy="520.8" rx="6" ry="5" fill="#9a9a9a"/>
<ellipse cx="479.2" cy="530.7" rx="8" ry="6" fill="#8a8a8a"/>
<ellipse cx="480.5" cy="543.6" rx="8" ry="6" fill="#888"/>
<ellipse cx="481.8" cy="556.6" rx="8" ry="6" fill="#868686"/>
<ellipse cx="483.1" cy="573.5" rx="7" ry="6" fill="#a0a0a0"/>
</g>
<g filter="url(#tb1)" fill="none">
<path d="M583.5 380.2 C583.5 396.6 583.5 449.8 583.5 478.8 C583.5 507.7 583.2 538.9 583.5 554.0 C583.7 569.1 583.8 564.8 585.0 569.6 C586.2 574.3 588.5 578.7 590.7 582.5 C593.0 586.4 597.2 591.2 598.5 592.9" stroke="#b4b4b4" stroke-width="2"/>
<path d="M575.2 426.9 C575.2 439.9 575.5 483.1 575.7 504.7 C575.9 526.3 576.3 548.0 576.4 556.6" stroke="#666" stroke-width="0.8"/>
<path d="M507.7 390.6 C511.2 391.9 521.5 398.3 528.5 398.3 C535.4 398.3 543.2 388.4 549.2 390.6 C555.3 392.7 562.2 407.9 564.8 411.3" stroke="#6a6a6a" stroke-width="0.8"/>
<path d="M512.9 406.1 C517.2 406.6 531.0 409.6 538.8 408.7 C546.6 407.9 556.1 402.2 559.6 400.9" stroke="#6a6a6a" stroke-width="0.8"/>
<path d="M546.6 388.0 C548.8 390.6 555.3 397.1 559.6 403.5 C563.9 410.0 570.4 423.0 572.6 426.9" stroke="#6a6a6a" stroke-width="0.8"/>
<path d="M538.8 551.4 C542.3 552.3 552.2 556.2 559.6 556.6 C566.9 557.0 575.2 553.1 582.9 554.0 C590.7 554.9 602.4 560.5 606.3 561.8" stroke="#6a6a6a" stroke-width="0.8"/>
<path d="M551.8 587.7 C554.0 584.3 559.6 572.2 564.8 567.0 C570.0 561.8 579.9 558.3 582.9 556.6" stroke="#6a6a6a" stroke-width="0.8"/>
</g>
</g>
<g shape-rendering="crispEdges">
<rect x="347" y="387.600" width="198.300" height="1.300" fill="#e9e600"/>
<rect x="347" y="553.900" width="198.300" height="1.300" fill="#e9e600"/>
<rect x="347" y="507" width="198.300" height="3" fill="#008000"/>
</g>
</g>
</svg>
<!-- /IMG1 -->
<div class="vt" style="left:5px;top:8px">SANTHOSHKUMAR M 24M</div>
<div class="vt" style="left:5px;top:28px">308058</div>
<div class="vt" style="left:5px;top:48px">M</div>
<div class="vt" style="left:212px;top:8px;width:40px;margin-left:-20px;text-align:center">S</div>
<div class="vt" style="right:7px;top:8px;text-align:right">19/08/2016 08:42:12</div>
<div class="vt" style="right:7px;top:28px;text-align:right">Head 01_SKS_HeadRoutin5 (Adult)</div>
<div class="vt" style="right:7px;top:48px;text-align:right">Topogram 0.6 T20s</div>
<div class="vt" style="left:5px;top:358px">A</div>
<div class="vt" style="right:10px;top:358px;text-align:right">P</div>
<div class="vt" style="left:5px;top:646px">Image:1/ 1</div>
<div class="vt" style="left:5px;top:666px">WL: 50 / WW: 500</div>
<div class="vt" style="left:5px;top:686px">Loc: 69.00 mm</div>
<div class="vt" style="left:205px;top:686px;width:40px;margin-left:-20px;text-align:center">I</div>
<div class="vt" style="right:7px;top:646px;text-align:right">Image size:512x512</div>
<div class="vt" style="right:7px;top:666px;text-align:right">View size:413x716</div>
<div class="vt" style="right:7px;top:686px;text-align:right">Zoom: 80%</div>
</div>
<div class="vp" id="vp2" style="left:674px;top:46px;width:415px;height:718px;border:1px solid #ff8a00">
<!-- IMG2 -->
<svg class="abs" style="left:0;top:0" width="413" height="714" viewBox="679 129 413 714">
<defs><filter id="b1" x="-5%" y="-5%" width="110%" height="110%"><feGaussianBlur stdDeviation="0.65"/></filter><filter id="b2" x="-5%" y="-5%" width="110%" height="110%"><feGaussianBlur stdDeviation="1.5"/></filter><filter id="b3" x="-10%" y="-10%" width="120%" height="120%"><feGaussianBlur stdDeviation="2.5"/></filter>
<clipPath id="ctclip"><rect x="680" y="282" width="411" height="411"/></clipPath></defs>
<g clip-path="url(#ctclip)">
<g filter="url(#b1)" fill="none" stroke="#fff" stroke-linecap="round">
<path d="M1070.0 572.5 A187 187 0 0 1 1070.4 592.0" stroke-width="1.6"/>
<path d="M697.0 572.5 A187 187 0 0 0 696.6 592.0" stroke-width="1.6"/>
<path d="M1070.0 592.0 A186.6 186.6 0 0 1 1066.0 624.3" stroke-width="2.6"/>
<path d="M697.0 592.0 A186.6 186.6 0 0 0 701.0 624.3" stroke-width="2.6"/>
<path d="M1066.7 617.8 A186 186 0 0 1 1026.0 705.1" stroke-width="3.8"/>
<path d="M700.3 617.8 A186 186 0 0 0 741.0 705.1" stroke-width="3.8"/>
</g>
<g filter="url(#b1)">
<path d="M857.3 347.4 C854.5 347.4 851.2 348.8 849.2 350.6 C847.2 352.4 846.3 354.5 845.2 358.0 C844.1 361.6 843.4 367.4 842.4 371.8 C841.5 376.3 840.6 381.0 839.5 384.6 C838.3 388.2 838.4 391.3 835.6 393.5 C832.9 395.7 828.7 395.6 822.8 397.7 C816.9 399.8 807.8 402.1 800.3 406.1 C792.8 410.1 784.2 415.9 777.8 421.6 C771.4 427.3 766.1 433.7 761.8 440.3 C757.6 447.0 754.8 454.1 752.3 461.5 C749.8 469.0 748.2 477.5 747.0 484.9 C745.7 492.3 745.0 499.0 744.9 506.1 C744.7 513.2 745.1 521.3 745.9 527.3 C746.7 533.3 748.8 537.9 749.5 542.2 C750.2 546.5 747.9 546.6 750.2 553.0 C752.4 559.5 757.8 572.1 762.9 581.0 C767.9 589.9 773.9 598.3 780.7 606.4 C787.4 614.4 795.5 622.5 803.5 629.3 C811.6 636.0 820.5 642.0 828.9 647.0 C837.4 652.1 845.9 656.7 854.3 659.7 C862.8 662.8 871.3 664.9 879.7 665.3 C888.2 665.8 896.7 664.5 905.2 662.3 C913.6 660.1 922.1 657.2 930.6 652.1 C939.0 647.0 947.9 639.8 956.0 631.8 C964.0 623.8 973.1 611.5 978.8 603.8 C984.6 596.2 987.8 592.5 990.3 586.1 C992.7 579.7 993.2 571.8 993.5 565.5 C993.9 559.3 993.2 553.1 992.5 548.5 C991.8 543.9 990.8 541.5 989.3 537.9 C987.8 534.4 984.1 530.4 983.6 527.3 C983.0 524.2 984.1 521.1 986.1 519.3 C988.1 517.4 992.6 518.3 995.6 516.3 C998.7 514.3 1002.2 510.3 1004.1 507.2 C1006.1 504.0 1007.0 501.3 1007.3 497.6 C1007.7 493.9 1007.3 490.5 1006.3 484.9 C1005.2 479.2 1002.9 470.7 1001.0 463.7 C999.0 456.6 997.4 449.2 994.6 442.4 C991.8 435.7 988.2 429.0 984.0 423.3 C979.7 417.7 978.6 413.0 969.1 408.5 C959.6 404.0 937.7 399.2 926.9 396.3 C916.1 393.3 910.7 392.4 904.4 390.6 C898.1 388.9 892.7 387.3 889.1 385.6 C885.5 383.9 884.9 383.0 882.8 380.3 C880.6 377.7 878.2 373.4 876.4 369.7 C874.6 366.0 873.4 361.2 871.7 358.0 C870.0 354.9 868.6 352.4 866.2 350.6 C863.8 348.8 860.1 347.4 857.3 347.4 Z" fill="#181818" stroke="#7c7c7c" stroke-width="1.3"/>
<path d="M750.2 540.1 C748.0 540.2 746.1 546.1 742.7 549.6 C739.4 553.1 733.5 558.0 730.0 561.3 C726.5 564.5 723.0 566.9 722.0 569.0 C721.0 571.1 722.0 574.2 724.0 574.0 C726.0 573.8 730.4 570.6 734.2 567.6 C738.1 564.6 743.4 559.2 747.0 556.0 C750.5 552.8 754.9 551.2 755.5 548.5 C756.0 545.9 752.3 539.9 750.2 540.1 Z" fill="#707070"/>
<path d="M986.1 535.8 C987.2 535.5 990.2 540.8 992.5 542.6 C994.8 544.4 996.8 546.1 999.9 546.8 C1003.0 547.6 1008.9 548.2 1011.1 546.8 C1013.4 545.5 1012.5 539.9 1013.3 539.0 C1014.0 538.0 1014.9 539.3 1015.8 541.1 C1016.8 542.9 1017.2 546.1 1019.0 549.6 C1020.8 553.1 1026.0 559.5 1026.8 562.3 C1027.7 565.2 1025.6 566.1 1024.3 566.6 C1023.0 567.0 1021.0 566.6 1019.0 565.1 C1016.9 563.6 1015.0 559.2 1012.0 557.5 C1009.0 555.8 1004.4 556.0 1001.0 554.9 C997.5 553.8 993.9 552.9 991.4 551.1 C988.9 549.3 987.0 546.8 986.1 544.3 C985.2 541.8 985.0 536.1 986.1 535.8 Z" fill="#8a8a8a"/>
</g>
<g filter="url(#b2)">
<path d="M857.3 353.2 C855.2 353.3 852.4 353.5 850.9 355.9 C849.4 358.3 849.3 363.2 848.4 367.6 C847.5 372.0 846.6 377.8 845.6 382.4 C844.6 387.1 846.9 388.6 842.4 395.6 C838.0 402.6 825.5 418.4 819.1 424.4 C812.8 430.4 808.9 429.2 804.3 431.8 C799.7 434.5 796.3 438.0 791.5 440.3 C786.8 442.6 779.3 441.7 775.6 445.6 C771.9 449.5 771.0 457.1 769.3 463.7 C767.5 470.2 766.3 477.8 765.0 484.9 C763.8 492.0 762.7 499.0 761.8 506.1 C760.9 513.2 760.2 520.6 759.7 527.3 C759.2 534.0 757.3 537.9 758.6 546.4 C760.0 554.9 763.9 569.3 767.9 578.4 C772.0 587.6 776.8 593.7 783.2 601.3 C789.5 608.9 797.6 617.4 806.1 624.2 C814.5 631.0 825.1 637.9 834.0 642.0 C842.9 646.0 851.0 647.0 859.4 648.3 C867.9 649.6 875.9 649.8 884.8 649.6 C893.7 649.4 903.9 649.6 912.8 647.0 C921.7 644.5 930.1 639.8 938.2 634.3 C946.2 628.8 954.7 620.8 961.1 614.0 C967.4 607.2 972.5 599.6 976.3 593.7 C980.1 587.8 983.3 590.9 983.9 578.4 C984.5 566.0 979.7 531.6 979.7 518.8 C979.7 506.1 982.9 506.8 984.0 501.9 C985.0 496.9 986.8 494.4 986.1 489.1 C985.4 483.8 981.9 476.0 979.7 470.0 C977.6 464.0 975.8 458.7 973.4 453.1 C970.9 447.4 969.1 441.6 964.9 436.1 C960.6 430.6 953.6 423.9 947.9 420.2 C942.2 416.4 936.9 414.3 930.9 413.8 C924.9 413.3 917.8 418.2 911.8 417.0 C905.8 415.7 899.5 411.6 894.9 406.4 C890.2 401.1 887.1 391.4 883.8 385.6 C880.6 379.9 877.6 376.3 875.3 371.8 C873.0 367.4 872.0 361.9 870.0 359.1 C868.1 356.3 865.8 355.8 863.7 354.9 C861.5 353.9 859.4 353.0 857.3 353.2 Z" fill="#8f8f8f"/>
</g>
<g filter="url(#b1)">
<path d="M857.3 348.7 C854.7 348.7 851.9 349.7 850.1 351.5 C848.3 353.2 847.5 355.7 846.5 359.1 C845.4 362.5 844.6 367.6 843.7 371.8 C842.8 376.1 842.1 380.8 841.2 384.6 C840.2 388.3 837.5 391.5 838.2 394.3 C838.9 397.2 841.4 400.0 845.6 401.5 C849.9 403.1 857.5 404.4 863.7 403.7 C869.8 403.0 878.6 399.9 882.8 397.3 C886.9 394.7 888.8 390.6 888.7 388.0 C888.6 385.3 884.5 384.1 882.3 381.2 C880.2 378.2 877.7 373.9 875.8 370.1 C873.8 366.4 872.4 361.8 870.7 358.7 C868.9 355.6 867.6 353.1 865.4 351.5 C863.1 349.8 859.8 348.7 857.3 348.7 Z" fill="#747474"/>
</g>
<g filter="url(#b2)" fill="none" stroke="#555" stroke-linecap="round">
<path d="M780.6 432.8 C783.4 431.0 790.9 425.1 797.5 421.6 C804.1 418.1 813.9 414.5 820.0 411.7 C826.1 408.9 831.7 405.9 834.1 404.7" stroke-width="3"/>
<path d="M898.8 396.3 C902.5 397.3 913.3 399.6 921.3 402.4 C929.2 405.3 938.6 409.0 946.6 413.1 C954.6 417.3 963.0 422.0 969.1 427.2 C975.2 432.4 980.8 441.3 983.2 444.1" stroke-width="4"/>
<path d="M990.3 463.7 C991.1 467.2 994.2 478.5 994.6 484.9 C994.9 491.2 992.8 499.0 992.5 501.9" stroke-width="3" stroke="#3c3c3c"/>
<path d="M755.5 463.7 C755.1 467.9 753.5 479.9 753.3 489.1 C753.2 498.3 754.2 513.9 754.4 518.8" stroke-width="3" stroke="#3c3c3c"/>
</g>
<g filter="url(#b1)" fill="#1b1b1b">
<path d="M791.7 454.7 C793.0 453.7 797.7 453.8 800.8 455.1 C804.0 456.4 808.0 459.3 810.8 462.5 C813.5 465.6 815.0 470.7 817.1 473.8 C819.3 476.9 823.8 479.4 823.8 481.1 C823.8 482.8 819.8 484.7 817.1 484.0 C814.5 483.2 810.9 479.5 807.9 476.6 C805.0 473.7 802.0 469.3 799.4 466.7 C796.9 464.1 793.9 463.0 792.6 461.0 C791.3 459.0 790.3 455.7 791.7 454.7 Z" />
<path d="M806.5 519.1 C808.9 517.4 815.2 517.6 819.2 517.6 C823.3 517.6 827.3 517.9 830.6 519.1 C833.9 520.2 837.9 522.4 839.1 524.7 C840.2 527.1 840.0 531.1 837.6 533.2 C835.3 535.3 828.9 537.5 824.9 537.5 C820.9 537.5 816.9 534.9 813.6 533.2 C810.3 531.6 806.3 529.9 805.1 527.5 C803.9 525.2 804.2 520.7 806.5 519.1 Z" />
<path d="M951.1 442.0 C953.7 442.0 954.4 445.5 953.2 447.7 C952.0 450.0 946.8 452.9 943.7 455.6 C940.5 458.2 937.1 461.0 934.1 463.7 C931.1 466.3 927.7 470.7 925.6 471.7 C923.5 472.8 920.7 472.3 921.4 470.0 C922.1 467.8 927.1 462.1 929.9 458.4 C932.6 454.6 934.2 450.5 937.7 447.7 C941.3 445.0 948.5 442.0 951.1 442.0 Z" />
<path d="M909.7 504.0 C911.1 502.6 917.5 503.6 922.4 506.1 C927.4 508.6 934.8 515.3 939.4 518.8 C944.0 522.4 949.3 525.0 950.0 527.3 C950.7 529.6 947.2 533.0 943.7 532.6 C940.1 532.3 933.8 528.2 928.8 525.2 C923.9 522.2 917.1 518.1 914.0 514.6 C910.8 511.1 908.3 505.4 909.7 504.0 Z" />
<path d="M757.6 518.8 C759.4 518.8 763.6 523.8 766.1 527.3 C768.5 530.9 772.1 536.5 772.4 540.1 C772.8 543.6 770.3 548.5 768.2 548.5 C766.1 548.5 761.8 543.6 759.7 540.1 C757.6 536.5 755.8 530.9 755.5 527.3 C755.1 523.8 755.8 518.8 757.6 518.8 Z" fill="#3a3a3a"/>
</g>
<g filter="url(#b1)" fill="none" stroke="#222" stroke-linecap="round" stroke-linejoin="round">
<path d="M879.7 607.7 C880.0 610.0 880.5 616.3 881.0 621.6 C881.5 626.9 882.5 636.5 882.8 639.4" stroke-width="2.4"/>
<path d="M851.8 622.9 C853.9 622.5 859.8 620.6 864.5 620.4 C869.2 620.2 874.2 621.8 879.7 621.6 C885.3 621.5 892.0 619.6 897.5 619.6 C903.0 619.6 910.2 621.3 912.8 621.6" stroke-width="2.2"/>
<path d="M841.6 603.8 C842.9 604.7 845.9 608.0 849.3 608.9 C852.6 609.9 859.8 609.4 862.0 609.4" stroke-width="3.5"/>
<path d="M917.9 605.1 C916.6 605.8 913.8 608.8 910.2 609.4 C906.6 610.1 898.6 609.0 896.3 608.9" stroke-width="3.5"/>
<path d="M813.7 568.3 C815.0 570.4 818.8 576.7 821.3 581.0 C823.8 585.2 826.0 589.9 828.9 593.7 C831.9 597.5 836.1 601.5 839.1 603.8 C842.1 606.2 845.4 607.0 846.7 607.7" stroke-width="5.5"/>
<path d="M943.3 593.7 C942.4 595.0 940.7 599.2 938.2 601.3 C935.6 603.4 931.4 605.3 928.0 606.4 C924.6 607.4 919.6 607.4 917.9 607.7" stroke-width="4"/>
<path d="M831.5 624.2 C830.2 625.4 826.4 629.3 823.8 631.8 C821.3 634.3 817.5 638.1 816.2 639.4" stroke-width="1.6"/>
<path d="M925.5 624.2 C927.2 625.0 932.7 627.6 935.6 629.3 C938.6 631.0 942.0 633.5 943.3 634.3" stroke-width="1.6"/>
<path d="M798.4 593.7 C799.3 595.4 801.4 600.5 803.5 603.8 C805.6 607.2 808.6 611.0 811.1 614.0 C813.7 617.0 817.5 620.4 818.8 621.6" stroke-width="2"/>
<path d="M958.5 586.1 C957.7 588.2 955.5 595.0 953.4 598.8 C951.3 602.6 948.3 606.0 945.8 608.9 C943.3 611.9 939.5 615.3 938.2 616.6" stroke-width="2"/>
<path d="M806.1 535.2 C807.3 534.4 810.7 530.6 813.7 530.2 C816.6 529.7 822.2 532.3 823.8 532.7" stroke-width="3.5"/>
<path d="M803.5 530.2 C803.1 531.4 801.4 536.5 801.0 537.8" stroke-width="3"/>
<path d="M813.8 518.8 C815.1 519.7 818.6 523.6 821.2 524.1 C823.9 524.7 829.4 520.8 829.7 522.0 C830.1 523.3 825.8 529.3 823.4 531.6 C820.9 533.9 816.3 535.1 814.9 535.8" stroke-width="6"/>
<path d="M800.0 527.3 C800.7 528.7 803.9 532.6 804.3 535.8 C804.6 539.0 802.5 544.7 802.1 546.4" stroke-width="3"/>
<path d="M797.9 461.5 C799.3 463.0 803.9 467.2 806.4 470.0 C808.9 472.9 811.7 477.1 812.8 478.5" stroke-width="2.5"/>
<path d="M757.6 489.1 C758.3 492.7 760.1 504.0 761.8 510.3 C763.6 516.7 767.1 524.5 768.2 527.3" stroke-width="3"/>
<path d="M848.8 535.8 C850.6 536.2 855.9 538.3 859.4 537.9 C863.0 537.6 868.3 534.4 870.1 533.7" stroke-width="2"/>
<path d="M918.2 506.1 C919.6 507.5 923.5 512.1 926.7 514.6 C929.9 517.1 934.5 518.8 937.3 521.0 C940.1 523.1 942.6 526.3 943.7 527.3" stroke-width="5"/>
<path d="M907.6 491.2 C909.0 492.7 913.6 496.9 916.1 499.7 C918.5 502.6 921.4 506.8 922.4 508.2" stroke-width="3"/>
<path d="M950.0 489.1 C949.0 490.2 943.7 492.7 943.7 495.5 C943.7 498.3 949.0 504.3 950.0 506.1" stroke-width="2.5"/>
<path d="M979.7 491.2 C978.3 492.7 972.3 495.8 971.2 499.7 C970.2 503.6 973.0 512.1 973.4 514.6" stroke-width="3"/>
<path d="M954.3 535.8 C953.6 537.6 951.8 543.9 950.0 546.4 C948.3 548.9 944.7 550.0 943.7 550.7" stroke-width="3"/>
<path d="M882.1 529.4 C883.9 529.1 889.2 527.0 892.7 527.3 C896.3 527.7 899.5 531.6 903.3 531.6 C907.2 531.6 914.0 528.0 916.1 527.3" stroke-width="2"/>
<path d="M916.1 527.3 C916.8 528.7 917.8 533.7 920.3 535.8 C922.8 537.9 929.2 539.3 930.9 540.1" stroke-width="2"/>
</g>
<g filter="url(#b2)">
<ellipse cx="779.9" cy="484.9" rx="12" ry="20" fill="#9b9b9b"/>
<ellipse cx="819.1" cy="501.9" rx="14" ry="14" fill="#979797"/>
<ellipse cx="964.9" cy="472.1" rx="16" ry="20" fill="#9b9b9b"/>
<ellipse cx="933.1" cy="497.6" rx="16" ry="14" fill="#979797"/>
<ellipse cx="856.9" cy="527.6" rx="14" ry="8" fill="#999"/>
<ellipse cx="895.0" cy="527.6" rx="14" ry="8" fill="#999"/>
<ellipse cx="859.4" cy="635.6" rx="22" ry="9" fill="#979797"/>
<ellipse cx="907.7" cy="634.3" rx="22" ry="9" fill="#979797"/>
</g>
<g filter="url(#b1)">
<path d="M790.5 449.9 C792.6 448.9 806.9 450.9 814.9 450.9 C822.8 450.9 834.0 447.7 838.2 449.9 C842.5 452.0 840.7 459.4 840.3 463.7 C840.0 467.9 838.6 472.9 836.1 475.3 C833.6 477.7 828.3 478.3 825.5 478.1 C822.7 477.8 821.2 476.0 819.1 473.8 C817.0 471.7 815.6 468.2 812.8 465.4 C809.9 462.5 805.9 459.5 802.1 456.9 C798.4 454.3 788.4 450.9 790.5 449.9 Z" fill="#a0a0a0"/>
<path d="M897.0 439.3 C901.5 437.8 913.6 439.8 922.4 439.9 C931.3 440.0 947.6 439.0 950.0 439.9 C952.5 440.7 940.7 442.4 937.3 445.0 C933.9 447.5 932.3 451.7 929.9 455.2 C927.4 458.6 925.1 463.0 922.4 465.8 C919.8 468.5 917.1 470.9 914.0 471.7 C910.8 472.5 906.1 472.4 903.3 470.7 C900.6 469.0 898.7 465.2 897.4 461.5 C896.1 457.9 895.3 452.5 895.3 448.8 C895.2 445.1 892.4 440.7 897.0 439.3 Z" fill="#a0a0a0"/>
<path d="M848.4 401.5 C849.2 397.3 853.9 399.1 855.6 403.7 C857.3 408.3 857.5 419.9 858.4 429.1 C859.2 438.3 860.3 451.1 860.5 458.8 C860.7 466.6 861.0 472.6 859.4 475.8 C857.8 479.0 852.5 480.8 850.9 477.9 C849.3 475.1 849.9 467.0 849.9 458.8 C849.9 450.7 851.2 438.7 850.9 429.1 C850.7 419.6 847.6 405.8 848.4 401.5 Z" fill="#8a8a8a"/>
<path d="M849.2 360.2 C850.1 358.7 852.1 358.1 853.5 358.7 C854.8 359.2 856.6 359.4 857.3 363.3 C858.0 367.3 857.2 375.7 857.7 382.4 C858.2 389.2 859.6 395.9 860.5 403.7 C861.4 411.4 862.7 419.9 863.2 429.1 C863.8 438.3 863.8 451.1 863.7 458.8 C863.6 466.6 863.9 472.0 862.6 475.8 C861.3 479.6 857.2 481.8 855.6 481.8 C854.0 481.8 852.8 479.6 853.1 475.8 C853.3 472.0 856.2 466.6 856.9 458.8 C857.5 451.1 857.2 438.3 856.9 429.1 C856.5 419.9 855.7 411.4 854.7 403.7 C853.8 395.9 852.0 388.5 850.9 382.4 C849.9 376.4 848.7 371.3 848.4 367.6 C848.1 363.9 848.4 361.6 849.2 360.2 Z" fill="#000"/>
<path d="M863.7 360.8 C864.4 359.4 866.7 358.7 868.3 359.1 C869.9 359.5 872.1 359.5 873.2 363.3 C874.3 367.2 873.9 375.7 874.7 382.4 C875.5 389.2 877.1 396.6 878.1 403.7 C879.1 410.7 878.8 418.5 880.6 424.9 C882.5 431.2 886.9 436.9 889.1 441.9 C891.3 446.8 893.1 448.9 893.8 454.6 C894.5 460.2 894.9 471.6 893.4 475.8 C891.9 480.1 888.2 479.7 884.9 480.1 C881.5 480.4 875.3 481.5 873.2 477.9 C871.1 474.4 872.5 467.0 872.1 458.8 C871.8 450.7 871.7 438.3 871.1 429.1 C870.5 419.9 869.1 411.4 868.3 403.7 C867.5 395.9 867.0 388.5 866.2 382.4 C865.4 376.4 864.1 371.2 863.7 367.6 C863.2 364.0 862.9 362.2 863.7 360.8 Z" fill="#000"/>
<path d="M845.0 482.6 C846.9 480.8 850.9 480.9 855.6 480.1 C860.3 479.2 867.6 478.2 873.2 477.5 C878.8 476.8 885.7 475.4 889.1 475.8 C892.6 476.2 893.2 478.1 893.8 480.1 C894.4 482.0 894.4 485.3 892.9 487.5 C891.5 489.7 886.9 490.6 885.3 493.2 C883.7 495.8 886.8 501.0 883.2 503.0 C879.6 505.0 869.7 505.7 863.7 505.1 C857.6 504.5 850.4 501.9 847.1 499.6 C843.9 497.2 844.5 493.9 844.1 491.1 C843.8 488.3 843.1 484.4 845.0 482.6 Z" fill="#000"/>
<path d="M788.4 441.6 L804.3 434.0 L831.9 421.2 L836.7 420.2 L838.6 438.2 L837.6 448.0 L823.4 451.1 L800.0 450.1 L791.5 448.0 Z" fill="#000"/>
<path d="M895.3 408.9 L903.3 412.3 L911.8 420.2 L930.9 417.0 L943.7 422.3 L953.2 429.7 L954.7 435.0 L948.3 439.5 L902.9 439.5 L899.7 431.8 L896.6 421.2 Z" fill="#000"/>
</g>
<g filter="url(#b1)" fill="none" stroke="#fff" stroke-linecap="round" stroke-linejoin="round">
<path d="M790.5 440.3 C792.8 438.9 799.5 434.5 804.3 431.8 C809.0 429.2 814.2 426.7 819.1 424.4 C824.1 422.1 830.4 420.5 834.0 418.0 C837.5 415.6 839.3 411.0 840.3 409.5" stroke-width="2.8"/>
<path d="M786.7 441.2 C788.8 440.0 795.4 436.2 799.4 434.2 C803.4 432.1 808.9 430.0 810.8 429.2" stroke-width="4"/>
<path d="M790.1 450.9 C792.1 452.0 798.4 454.8 802.1 457.3 C805.9 459.8 809.9 463.0 812.8 465.8 C815.6 468.6 817.0 472.1 819.1 474.3 C821.2 476.4 822.7 478.3 825.5 478.5 C828.3 478.8 834.3 476.2 836.1 475.8" stroke-width="2.6"/>
<path d="M829.7 480.2 C829.4 482.1 828.5 488.1 827.6 491.2 C826.7 494.4 825.0 498.0 824.4 499.3" stroke-width="3"/>
<path d="M840.3 480.2 C840.7 481.3 841.9 485.1 842.5 487.0 C843.0 488.9 843.4 490.9 843.5 491.7" stroke-width="2.4"/>
<path d="M863.7 416.4 C864.1 419.6 865.3 428.8 866.2 435.5 C867.1 442.2 868.0 449.7 869.0 456.7 C870.0 463.7 871.6 474.0 872.1 477.5" stroke-width="2.6"/>
<path d="M860.1 361.2 C860.3 364.0 861.0 372.5 861.5 378.2 C862.1 383.9 863.0 392.3 863.2 395.2" stroke-width="1.4"/>
<path d="M894.9 406.4 C897.7 408.1 905.8 415.7 911.8 417.0 C917.8 418.2 924.9 413.3 930.9 413.8 C936.9 414.3 943.3 417.5 947.9 420.2 C952.5 422.8 956.7 428.1 958.5 429.7" stroke-width="2.8"/>
<path d="M950.0 440.3 C947.9 441.0 940.7 442.1 937.3 444.6 C933.9 447.0 932.3 451.6 929.9 455.2 C927.4 458.7 925.1 463.0 922.4 465.8 C919.8 468.6 917.1 471.3 914.0 472.1 C910.8 473.0 906.1 472.8 903.3 471.1 C900.6 469.4 898.8 465.6 897.4 462.0 C896.0 458.3 895.3 451.4 894.9 449.2" stroke-width="2.6"/>
<path d="M884.2 412.7 C885.3 416.3 888.8 427.2 890.6 434.0 C892.4 440.7 893.9 447.0 895.3 453.1 C896.7 459.1 898.1 464.7 899.1 470.0 C900.1 475.3 900.9 482.4 901.2 484.9" stroke-width="3"/>
<path d="M901.2 471.1 C901.4 472.7 901.9 478.1 902.3 480.6 C902.6 483.2 903.2 485.6 903.3 486.6" stroke-width="3.5"/>
<path d="M912.9 474.3 C913.8 476.0 916.8 481.3 918.2 484.9 C919.6 488.4 920.8 493.7 921.4 495.5" stroke-width="3"/>
</g>
<g filter="url(#b1)" fill="#fff">
<path d="M772.8 452.5 C772.9 450.2 773.8 446.4 775.4 444.1 C777.0 441.7 780.0 439.6 782.5 438.4 C784.9 437.2 788.4 435.3 789.8 437.0 C791.2 438.6 791.3 445.1 790.9 448.3 C790.5 451.5 789.1 454.1 787.4 456.1 C785.8 458.1 783.2 460.0 781.0 460.3 C778.9 460.7 776.0 459.5 774.7 458.2 C773.3 456.9 772.7 454.9 772.8 452.5 Z" />
<path d="M842.4 395.6 C844.2 394.0 846.2 395.6 847.7 398.4 C849.3 401.1 851.1 406.0 852.0 412.1 C852.9 418.3 853.2 427.7 853.1 435.5 C852.9 443.3 851.5 451.8 850.9 458.8 C850.4 465.9 851.3 474.4 849.9 477.9 C848.5 481.5 843.9 483.2 842.4 480.1 C841.0 476.9 842.2 465.2 841.4 458.8 C840.6 452.5 838.7 448.2 837.8 441.9 C836.8 435.5 835.8 426.3 835.6 420.6 C835.5 415.0 836.0 412.1 837.1 407.9 C838.3 403.7 840.7 397.2 842.4 395.6 Z" />
<path d="M879.6 389.9 C880.2 387.4 882.6 390.8 884.9 393.1 C887.2 395.3 891.8 399.1 893.4 403.7 C895.0 408.3 894.3 414.3 894.4 420.6 C894.6 427.0 895.0 437.6 894.4 441.9 C893.9 446.1 892.8 446.5 891.2 446.1 C889.7 445.7 886.5 443.3 884.9 439.7 C883.3 436.2 882.3 430.2 881.7 424.9 C881.1 419.6 881.4 413.7 881.1 407.9 C880.7 402.1 878.9 392.3 879.6 389.9 Z" />
<path d="M953.2 428.6 C953.6 427.2 958.0 429.4 960.6 431.8 C963.3 434.3 967.2 440.0 969.1 443.5 C971.1 447.0 972.7 451.2 972.3 452.6 C972.0 454.0 969.3 454.0 967.0 452.0 C964.7 449.9 960.8 444.2 958.5 440.3 C956.2 436.4 952.9 430.1 953.2 428.6 Z" />
<path d="M788.4 480.2 C789.0 478.2 791.5 478.2 792.6 478.9 C793.7 479.7 794.6 482.1 794.7 484.9 C794.8 487.6 793.6 492.7 793.2 495.5 C792.9 498.3 792.2 498.7 792.6 501.9 C793.0 505.0 795.2 510.3 795.8 514.6 C796.4 518.8 796.7 523.8 796.2 527.3 C795.7 530.9 794.3 534.4 792.6 535.8 C790.9 537.2 787.9 537.2 786.2 535.8 C784.6 534.4 782.7 530.9 782.6 527.3 C782.5 523.8 784.5 518.8 785.6 514.6 C786.7 510.3 788.9 505.7 789.4 501.9 C790.0 498.0 789.2 494.9 789.0 491.2 C788.8 487.6 787.8 482.3 788.4 480.2 Z" />
<path d="M950.5 463.7 C951.0 462.4 953.2 462.5 954.3 463.2 C955.3 464.0 956.8 466.6 956.8 468.3 C956.8 470.1 955.2 473.2 954.3 473.6 C953.3 474.1 951.7 472.7 951.1 471.1 C950.5 469.4 949.9 465.0 950.5 463.7 Z" />
<path d="M959.6 498.0 C961.5 497.3 963.8 501.9 965.9 504.0 C968.1 506.0 971.8 507.9 972.5 510.3 C973.2 512.7 971.6 516.4 970.2 518.4 C968.7 520.5 966.4 521.9 963.8 522.7 C961.2 523.4 956.7 523.7 954.7 522.7 C952.7 521.6 951.7 518.7 951.7 516.3 C951.7 513.9 953.4 511.3 954.7 508.2 C956.0 505.2 957.7 498.7 959.6 498.0 Z" />
<ellipse cx="809.6" cy="542.2" rx="4.5" ry="4.8" />
<ellipse cx="946.8" cy="535.8" rx="4.2" ry="4.2" />
<path d="M773.0 563.7 C773.6 559.0 777.1 556.9 780.7 555.6 C784.3 554.2 790.8 554.0 794.6 555.6 C798.4 557.2 801.5 561.8 803.5 565.2 C805.5 568.7 807.2 572.9 806.6 576.4 C806.0 579.9 803.0 583.9 800.0 586.1 C796.9 588.2 792.1 589.8 788.3 589.4 C784.5 588.9 779.6 587.8 777.1 583.5 C774.6 579.2 772.4 568.4 773.0 563.7 Z" />
<path d="M832.7 569.5 C832.2 564.8 834.6 555.1 837.8 550.5 C841.0 545.9 845.2 543.9 851.8 541.9 C858.4 539.8 868.7 538.3 877.2 538.3 C885.7 538.3 895.8 539.8 902.6 541.9 C909.4 543.9 913.8 548.4 917.9 550.5 C921.9 552.6 922.9 554.7 926.8 554.6 C930.6 554.4 936.5 550.2 940.7 549.5 C945.0 548.7 948.8 551.3 952.2 550.0 C955.5 548.7 957.0 543.3 961.1 541.9 C965.1 540.4 972.1 539.5 976.3 541.3 C980.5 543.2 984.5 548.5 986.5 553.0 C988.4 557.5 989.2 563.6 988.0 568.3 C986.8 572.9 982.9 579.3 979.3 581.0 C975.8 582.7 970.5 578.2 966.6 578.4 C962.8 578.7 959.4 579.9 956.5 582.5 C953.5 585.1 951.4 592.7 948.9 594.2 C946.3 595.7 942.6 594.6 941.2 591.7 C939.9 588.7 942.6 580.0 940.7 576.4 C938.9 572.8 933.4 569.9 930.1 569.8 C926.8 569.7 922.6 571.5 920.9 575.9 C919.2 580.3 920.8 591.5 919.9 596.2 C919.0 601.0 919.0 602.4 915.3 604.4 C911.6 606.3 901.4 608.3 897.5 607.9 C893.6 607.5 895.3 601.6 891.9 601.8 C888.6 602.1 881.6 608.8 877.2 609.4 C872.8 610.0 868.7 605.6 865.8 605.4 C862.8 605.1 862.6 608.5 859.4 607.9 C856.2 607.3 849.7 604.5 846.7 601.8 C843.8 599.1 842.6 595.5 841.6 591.7 C840.7 587.8 842.6 582.6 841.1 578.9 C839.6 575.3 833.3 574.3 832.7 569.5 Z" />
</g>
<g filter="url(#b1)">
<path d="M840.7 414.7 C841.5 412.0 843.7 410.8 844.6 413.2 C845.4 415.6 845.9 424.1 845.8 429.1 C845.8 434.2 845.0 441.4 844.1 443.6 C843.3 445.7 841.5 444.3 840.7 441.9 C840.0 439.5 839.9 433.7 839.9 429.1 C839.9 424.6 840.0 417.3 840.7 414.7 Z" fill="#000"/>
<path d="M885.9 421.7 C886.9 419.9 889.5 418.8 890.8 420.2 C892.1 421.6 893.5 426.9 893.8 430.2 C894.1 433.4 893.5 438.3 892.5 439.7 C891.6 441.1 889.3 440.1 888.1 438.7 C886.9 437.3 885.7 434.1 885.3 431.2 C885.0 428.4 885.0 423.5 885.9 421.7 Z" fill="#000"/>
<path d="M893.4 402.8 C894.5 402.2 899.9 403.0 901.4 403.7 C902.9 404.4 903.4 406.4 902.3 407.1 C901.1 407.7 895.9 408.2 894.4 407.5 C892.9 406.8 892.2 403.4 893.4 402.8 Z" fill="#000"/>
<ellipse cx="878.5" cy="579.7" rx="23.5" ry="27.5" fill="#5d5d5d"/>
<ellipse cx="878.5" cy="579.7" rx="21.5" ry="25.5" fill="none" stroke="#6f6f6f" stroke-width="1.6"/>
<circle cx="790.3" cy="566.2" r="1.75" fill="#666"/>
<circle cx="788.3" cy="570.8" r="1.25" fill="#666"/>
<circle cx="793.9" cy="569.8" r="1.0" fill="#666"/>
<circle cx="969.9" cy="550.5" r="1.5" fill="#444"/>
<circle cx="964.9" cy="554.3" r="1.25" fill="#444"/>
<circle cx="973.8" cy="554.3" r="1.0" fill="#444"/>
<circle cx="963.6" cy="559.4" r="1.0" fill="#444"/>
<circle cx="961.1" cy="551.8" r="1.0" fill="#444"/>
<path d="M939.5 558.1 C940.9 557.0 945.2 556.0 945.8 556.8 C946.4 557.7 944.7 562.1 943.3 563.2 C941.8 564.3 937.6 564.5 936.9 563.7 C936.3 562.9 938.0 559.3 939.5 558.1 Z" fill="#999"/>
<ellipse cx="930.1" cy="578.9" rx="5.5" ry="6.5" fill="#333"/>
<ellipse cx="930.1" cy="581.0" rx="2.5" ry="3" fill="#777"/>
</g>
</g>
</svg>
<!-- /IMG2 -->
<div class="vt" style="left:4px;top:7px">SANTHOSHKUMAR M 24M</div>
<div class="vt" style="left:4px;top:27px">308058</div>
<div class="vt" style="left:4px;top:47px">M</div>
<div class="vt" style="left:211px;top:7px;width:40px;margin-left:-20px;text-align:center">A</div>
<div class="vt" style="right:6px;top:7px;text-align:right">19/08/2016 08:42:12</div>
<div class="vt" style="right:6px;top:27px;text-align:right">Head 01_SKS_HeadRoutin5 (Adult)</div>
<div class="vt" style="right:6px;top:47px;text-align:right">Head 2.0 H20s</div>
<div class="vt" style="left:4px;top:357px">R</div>
<div class="vt" style="right:34px;top:357px;text-align:right">L</div>
<div class="vt" style="right:14px;top:77px;text-align:right">1</div>
<div class="vt" style="right:6px;top:626px;text-align:right">209</div>
<div class="vt" style="left:4px;top:645px">Images:59/ 209</div>
<div class="vt" style="left:4px;top:665px">WL: 40 / WW: 200</div>
<div class="vt" style="left:4px;top:685px">Thick: 2.00 mm Loc: -214.50 mm</div>
<div class="vt" style="left:202px;top:685px;width:40px;margin-left:-20px;text-align:center">P</div>
<div class="vt" style="right:6px;top:645px;text-align:right">Image size:512x512</div>
<div class="vt" style="right:6px;top:665px;text-align:right">View size:413x716</div>
<div class="vt" style="right:6px;top:685px;text-align:right">Zoom: 80%</div>
<div class="abs" style="left:395px;top:101px;width:3px;height:521px;background:#303030;border:1px solid #555;border-width:1px 1px 1px 1px;border-radius:1.5px;box-sizing:border-box;width:3.4px"></div>
<div class="abs" style="left:381px;top:232px;width:28px;height:22px;border-radius:4.5px;background:#484848;border:1px solid #4a4033"></div>
<div class="vt" style="left:381px;top:232px;width:28px;height:22px;color:#fbf2c8;font-size:12px;font-weight:bold;line-height:22px;text-align:center;transform:translateY(1px)">59</div>
</div>
<!-- /VIEWPORTS -->
</div>
</body>
</html>
